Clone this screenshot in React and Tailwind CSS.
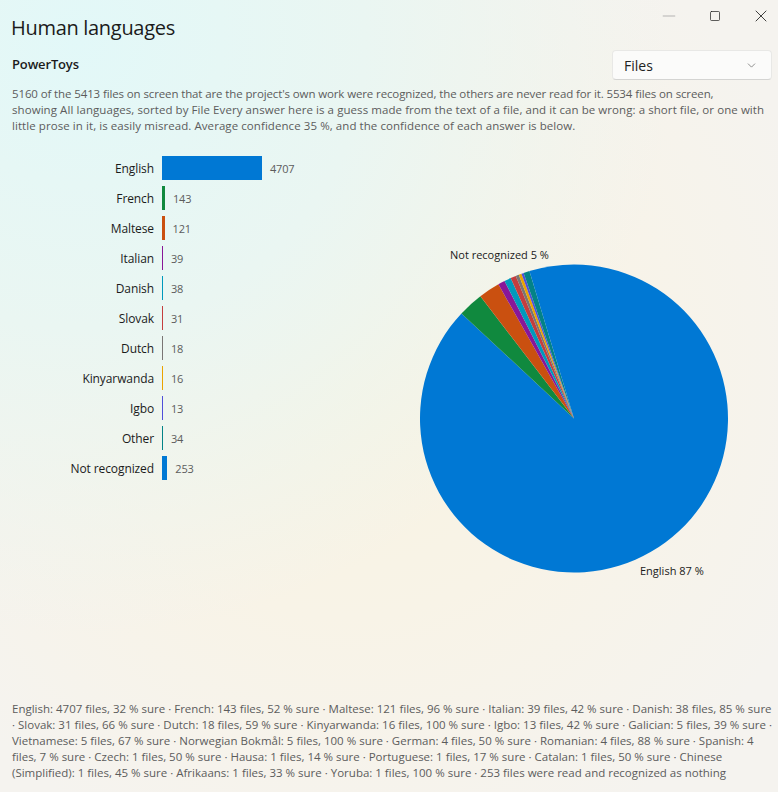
import React from 'react'
import { ChevronDown, Minus, Square, X } from 'lucide-react'

const rows = [
  { name: 'English', count: 4707, color: '#0078d4' },
  { name: 'French', count: 143, color: '#10893e' },
  { name: 'Maltese', count: 121, color: '#ca5010' },
  { name: 'Italian', count: 39, color: '#881798' },
  { name: 'Danish', count: 38, color: '#0099bc' },
  { name: 'Slovak', count: 31, color: '#c43e3e' },
  { name: 'Dutch', count: 18, color: '#7a7574' },
  { name: 'Kinyarwanda', count: 16, color: '#eaa300' },
  { name: 'Igbo', count: 13, color: '#4f4fd9' },
  { name: 'Other', count: 34, color: '#038387' },
  { name: 'Not recognized', count: 253, color: '#0078d4' },
]

const total = 5413
const summary = [
  'English: 4707 files, 32 % sure · French: 143 files, 52 % sure · Maltese: 121 files, 96 % sure · Italian: 39 files, 42 % sure · Danish: 38 files, 85 % sure',
  '· Slovak: 31 files, 66 % sure · Dutch: 18 files, 59 % sure · Kinyarwanda: 16 files, 100 % sure · Igbo: 13 files, 42 % sure · Galician: 5 files, 39 % sure ·',
  'Vietnamese: 5 files, 67 % sure · Norwegian Bokmål: 5 files, 100 % sure · German: 4 files, 50 % sure · Romanian: 4 files, 88 % sure · Spanish: 4',
  'files, 7 % sure · Czech: 1 files, 50 % sure · Hausa: 1 files, 14 % sure · Portuguese: 1 files, 17 % sure · Catalan: 1 files, 50 % sure · Chinese',
  '(Simplified): 1 files, 45 % sure · Afrikaans: 1 files, 33 % sure · Yoruba: 1 files, 100 % sure · 253 files were read and recognized as nothing',
]

function Pie() {
  const cx = 194, cy = 174.5, r = 154
  let angle = 0
  const point = a => [cx + r * Math.sin(a), cy - r * Math.cos(a)]
  return (
    <svg width="384" height="350" viewBox="0 0 384 350">
      {rows.map(row => {
        const sweep = (row.count / total) * Math.PI * 2
        const [x1, y1] = point(angle)
        angle += sweep
        const [x2, y2] = point(angle)
        return (
          <path
            key={row.name}
            d={`M${cx} ${cy}L${x1} ${y1}A${r} ${r} 0 ${sweep > Math.PI ? 1 : 0} 1 ${x2} ${y2}Z`}
            fill={row.color}
          />
        )
      })}
      <text x="70" y="15" fontSize="11" fill="#1a1a1a">Not recognized 5 %</text>
      <text x="260" y="331" fontSize="11" fill="#1a1a1a">English 87 %</text>
    </svg>
  )
}

export default function App() {
  return (
    <div className="w-[778px] h-[792px] overflow-hidden flex flex-col font-['Open_Sans',sans-serif] text-[#1b1b1b] bg-[radial-gradient(circle_at_10%_5%,#e2f8f8_0%,#eaf6f2_28%,transparent_58%),radial-gradient(circle_at_45%_48%,#f8f3e2_0%,#f8f3e7_40%,#f5f3ef_85%)]">
      <div className="relative h-[50px] shrink-0 pl-[11px] pt-[14px]">
        <h1 className="text-[20px] leading-[28px] font-medium tracking-[-0.3px]">Human languages</h1>
        <div className="absolute top-[6px] right-[7px] flex items-center gap-[30px]">
          <Minus size={20} strokeWidth={0.9} className="text-[#a0a0a0]" />
          <Square size={12} strokeWidth={1.4} />
          <X size={20} strokeWidth={1} />
        </div>
      </div>

      <div className="h-[30px] shrink-0 flex items-center justify-between pl-3 pr-[6px]">
        <span className="text-[13px] font-semibold tracking-[-0.15px]">PowerToys</span>
        <div className="w-[160px] h-[30px] pl-[11px] pr-[13px] flex items-center justify-between rounded-[4px] bg-[#fbfbfa] border border-[#e8e8e6] border-b-[#d4d4d2]">
          <span className="text-[14px] text-[#222]">Files</span>
          <ChevronDown size={13} strokeWidth={1.2} className="text-[#555]" />
        </div>
      </div>

      <div className="mt-[6px] pl-3 text-[11.5px] leading-[16px] text-[#5c5c5c] whitespace-nowrap shrink-0">
        <div className="tracking-[-0.12px]">5160 of the 5413 files on screen that are the project's own work were recognized, the others are never read for it. 5534 files on screen,</div>
        <div className="tracking-[0.07px]">showing All languages, sorted by File Every answer here is a guess made from the text of a file, and it can be wrong: a short file, or one with</div>
        <div className="tracking-[0.07px]">little prose in it, is easily misread. Average confidence 35 %, and the confidence of each answer is below.</div>
      </div>

      <div className="flex mt-[22px] flex-1">
        <div className="w-[384px] shrink-0 flex flex-col gap-[6px]">
          {rows.map(row => (
            <div key={row.name} className="h-6 flex items-center text-[12px]">
              <span className="w-[154px] text-right tracking-[-0.1px] mt-[2px]">{row.name}</span>
              <div className="ml-2 h-6" style={{ width: Math.max(row.count / 47.07, 1), backgroundColor: row.color }} />
              <span className="ml-2 mt-[2px] text-[11px] text-[#5c5c5c] tracking-[-0.2px]">{row.count}</span>
            </div>
          ))}
        </div>
        <div className="mt-[88px] -ml-1">
          <Pie />
        </div>
      </div>

      <div className="pl-3 pb-[11px] text-[11.5px] leading-[16px] text-[#5c5c5c] whitespace-nowrap shrink-0">
        {summary.map(line => <div key={line}>{line}</div>)}
      </div>
    </div>
  )
}
